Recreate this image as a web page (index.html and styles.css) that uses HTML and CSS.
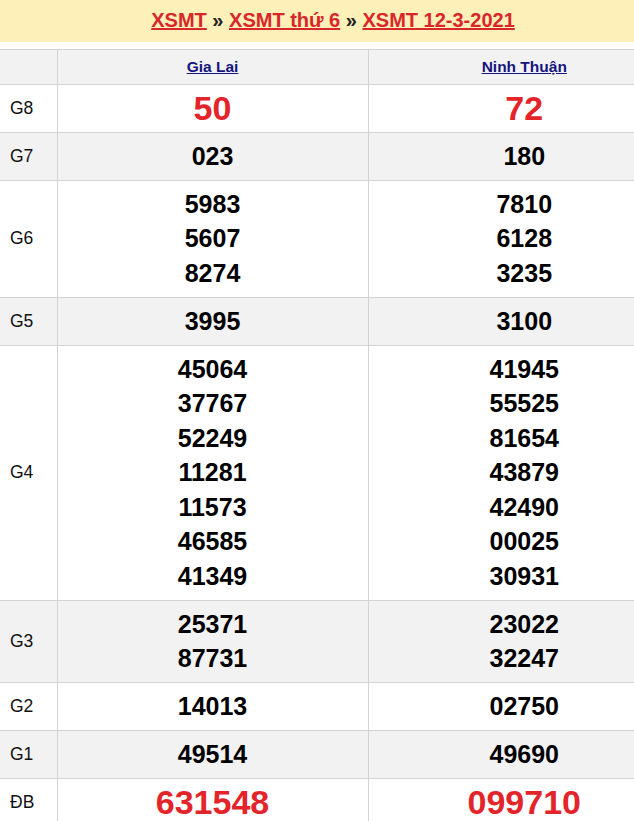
FILE: index.html
```html
<!DOCTYPE html>
<html lang="vi">
<head>
<meta charset="utf-8">
<title>XSMT 12-3-2021</title>
<link rel="stylesheet" href="styles.css">
</head>
<body>
<div class="page">
  <h2 class="title">
    <a href="#">XSMT</a> » <a href="#">XSMT thứ 6</a> » <a href="#">XSMT 12-3-2021</a>
  </h2>
  <table class="kq">
    <colgroup><col class="c-lbl"><col class="c-prov"><col class="c-prov2"></colgroup>
    <tr class="head">
      <td class="lbl"></td>
      <td><a href="#">Gia Lai</a></td>
      <td class="last"><a href="#">Ninh Thuận</a></td>
    </tr>
    <tr class="big">
      <td class="lbl">G8</td>
      <td><div class="n">50</div></td>
      <td class="last"><div class="n">72</div></td>
    </tr>
    <tr class="alt">
      <td class="lbl">G7</td>
      <td><div class="n">023</div></td>
      <td class="last"><div class="n">180</div></td>
    </tr>
    <tr>
      <td class="lbl">G6</td>
      <td><div class="n">5983</div><div class="n">5607</div><div class="n">8274</div></td>
      <td class="last"><div class="n">7810</div><div class="n">6128</div><div class="n">3235</div></td>
    </tr>
    <tr class="alt">
      <td class="lbl">G5</td>
      <td><div class="n">3995</div></td>
      <td class="last"><div class="n">3100</div></td>
    </tr>
    <tr>
      <td class="lbl">G4</td>
      <td><div class="n">45064</div><div class="n">37767</div><div class="n">52249</div><div class="n">11281</div><div class="n">11573</div><div class="n">46585</div><div class="n">41349</div></td>
      <td class="last"><div class="n">41945</div><div class="n">55525</div><div class="n">81654</div><div class="n">43879</div><div class="n">42490</div><div class="n">00025</div><div class="n">30931</div></td>
    </tr>
    <tr class="alt">
      <td class="lbl">G3</td>
      <td><div class="n">25371</div><div class="n">87731</div></td>
      <td class="last"><div class="n">23022</div><div class="n">32247</div></td>
    </tr>
    <tr>
      <td class="lbl">G2</td>
      <td><div class="n">14013</div></td>
      <td class="last"><div class="n">02750</div></td>
    </tr>
    <tr class="alt">
      <td class="lbl">G1</td>
      <td><div class="n">49514</div></td>
      <td class="last"><div class="n">49690</div></td>
    </tr>
    <tr class="big">
      <td class="lbl">ĐB</td>
      <td><div class="n">631548</div></td>
      <td class="last"><div class="n">099710</div></td>
    </tr>
  </table>
</div>
</body>
</html>
```

FILE: styles.css
```css
html, body {
  margin: 0;
  padding: 0;
  overflow: hidden;
  background: #fff;
}

body {
  font-family: "Liberation Sans", Arial, sans-serif;
  color: #000;
}

.page {
  width: 634px;
}

.title {
  margin: 0;
  height: 42px;
  line-height: 40px;
  background: #fdf0b8;
  font-size: 20px;
  font-weight: bold;
  text-align: center;
  padding-left: 32px;
  color: #222;
}

.title a {
  color: #d8272b;
  text-decoration: underline;
}

.kq {
  margin-top: 7px;
  width: 634px;
  border-collapse: collapse;
  table-layout: fixed;
}

.c-lbl { width: 57px; }
.c-prov { width: 311px; }
.c-prov2 { width: 266px; }

.kq td {
  border: 1px solid #d3d3d3;
  text-align: center;
  vertical-align: middle;
  padding: 6px 0 6.45px;
}

.kq td.lbl {
  border-left: none;
  text-align: left;
  padding-left: 10px;
  font-size: 17.5px;
  color: #111;
}

.kq td.last {
  border-right: none;
  padding-left: 46px;
}

.kq tr.head td {
  background: #f2f2f2;
  height: 22px;
  line-height: 22px;
  padding-top: 6px;
  padding-bottom: 6px;
  font-size: 15.5px;
  font-weight: bold;
}

.kq tr.head a {
  color: #15157f;
  text-decoration: underline;
}

.kq tr.alt td {
  background: #f2f2f2;
}

.n {
  font-size: 25px;
  font-weight: bold;
  line-height: 34.5px;
  color: #000;
}

.big .n {
  font-size: 34px;
  color: #e3242b;
}
```
